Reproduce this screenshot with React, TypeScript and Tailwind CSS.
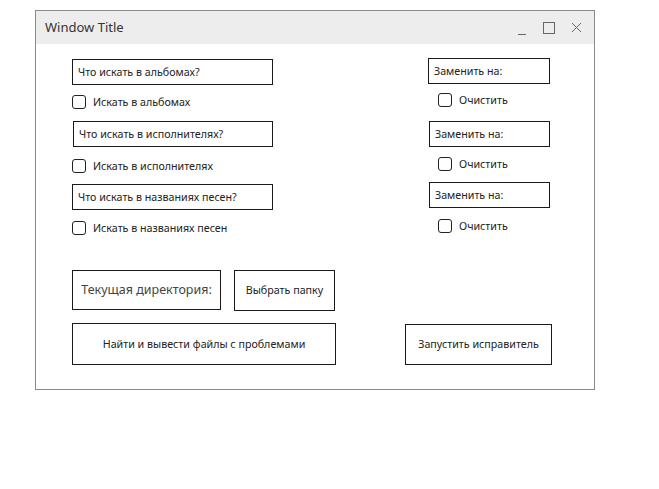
const font = { fontFamily: '"Noto Sans", "Open Sans", sans-serif' };

function Field({ label, className = "" }: { label: string; className?: string }) {
  return (
    <div className={`flex h-[26px] items-center border border-[#1a1a1a] bg-white pl-[5px] text-[10.7px] text-[#222] ${className}`}>
      {label}
    </div>
  );
}

function Check({ label, className = "" }: { label: string; className?: string }) {
  return (
    <label className={`flex h-[14px] items-center gap-[7px] text-[10.7px] text-[#222] ${className}`}>
      <span className="h-[14px] w-[14px] shrink-0 rounded-[3px] border-[1.5px] border-[#222] bg-white" />
      {label}
    </label>
  );
}

function Box({ label, className = "" }: { label: string; className?: string }) {
  return (
    <div className={`flex items-center justify-center border border-[#1a1a1a] bg-white text-[10.7px] text-[#222] ${className}`}>
      {label}
    </div>
  );
}

export default function App() {
  return (
    <div className="min-h-[489px] bg-white pl-[35px] pt-[10px]" style={font}>
      <div className="flex h-[380px] w-[560px] flex-col border border-[#8a8a8a] bg-white">
        <div className="flex h-[33px] shrink-0 items-center bg-[#ededed] pl-[9px] pr-[12px]">
          <span className="text-[13px] text-[#333]">Window Title</span>
          <div className="ml-auto flex items-center">
            <svg width="12" height="12" viewBox="0 0 12 12" className="mt-[4px]">
              <line x1="2" y1="10.5" x2="10" y2="10.5" stroke="#666" strokeWidth="1" />
            </svg>
            <svg width="12" height="12" viewBox="0 0 12 12" className="ml-[15px]">
              <rect x="0.5" y="0.5" width="11" height="11" fill="none" stroke="#666" strokeWidth="1" />
            </svg>
            <svg width="11" height="11" viewBox="0 0 11 11" className="ml-[16px]">
              <path d="M1 1 L10 10 M10 1 L1 10" stroke="#666" strokeWidth="1" />
            </svg>
          </div>
        </div>

        <div className="flex flex-col pl-[36px] pt-[14px]">
          <div className="flex items-start">
            <div className="mt-[1px] flex w-[201px] flex-col">
              <Field label="Что искать в альбомах?" />
              <Check label="Искать в альбомах" className="mt-[10px]" />
              <Field label="Что искать в исполнителях?" className="ml-[1px] mt-[12px]" />
              <Check label="Искать в исполнителях" className="mt-[12px]" />
              <Field label="Что искать в названиях песен?" className="mt-[11px]" />
              <Check label="Искать в названиях песен" className="mt-[11px]" />
            </div>
            <div className="ml-[155px] flex w-[122px] flex-col">
              <Field label="Заменить на:" />
              <Check label="Очистить" className="ml-[10px] mt-[9px]" />
              <Field label="Заменить на:" className="ml-[1px] mt-[14px]" />
              <Check label="Очистить" className="ml-[10px] mt-[10px]" />
              <Field label="Заменить на:" className="ml-[1px] mt-[11px]" />
              <Check label="Очистить" className="ml-[10px] mt-[11px]" />
            </div>
          </div>

          <div className="mt-[35px] flex items-start gap-[13px]">
            <div className="flex h-[40px] w-[149px] items-center justify-center border border-[#1a1a1a] text-[12.5px] text-[#444]">
              Текущая директория:
            </div>
            <Box label="Выбрать папку" className="h-[41px] w-[101px]" />
          </div>

          <div className="mt-[12px] flex items-start">
            <Box label="Найти и вывести файлы с проблемами" className="h-[42px] w-[264px]" />
            <Box label="Запустить исправитель" className="ml-[69px] mt-[1px] h-[41px] w-[147px]" />
          </div>
        </div>
      </div>
    </div>
  );
}
